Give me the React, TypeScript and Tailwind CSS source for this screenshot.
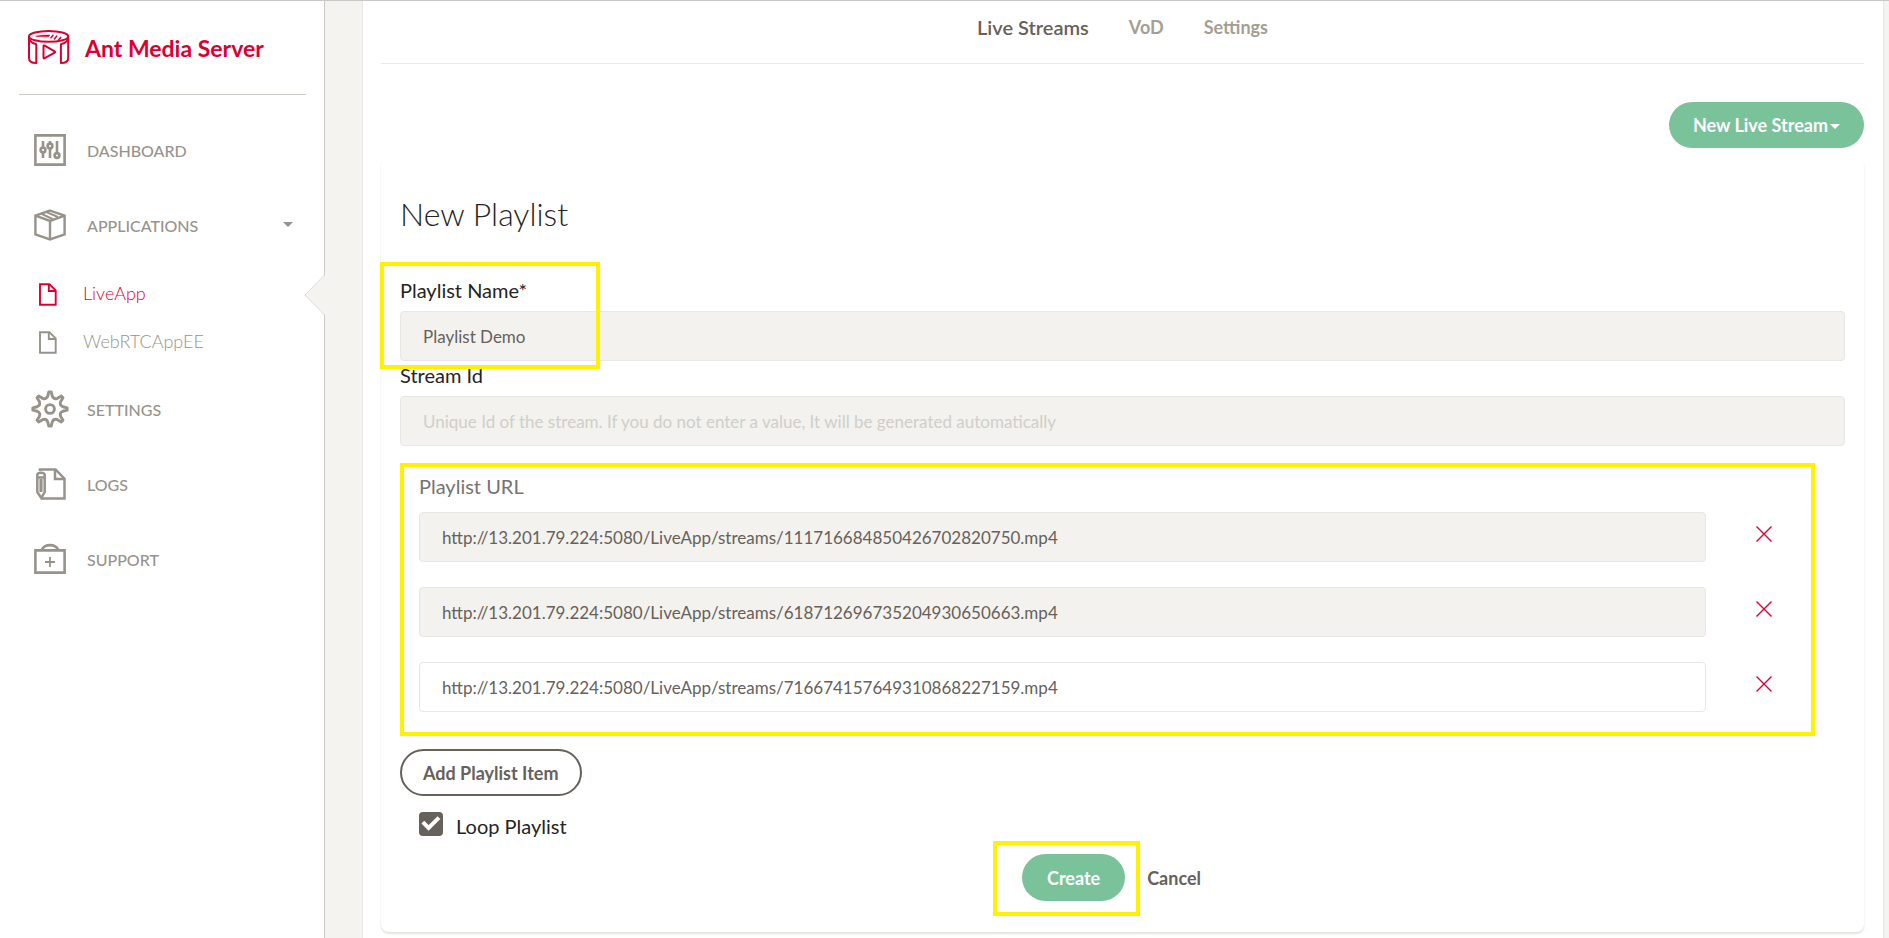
import React, { useState } from "react";

const gearPath = (() => {
  const parts: string[] = [];
  const at = (r: number, deg: number) => {
    const a = (deg * Math.PI) / 180;
    return `${(19 + r * Math.cos(a)).toFixed(2)} ${(19 + r * Math.sin(a)).toFixed(2)}`;
  };
  for (let i = 0; i < 8; i++) {
    const d = i * 45;
    parts.push(`${i === 0 ? "M" : "L"}${at(17.2, d - 4)}`);
    parts.push(`L${at(17.2, d + 4)}`);
    parts.push(`L${at(13, d + 10)}`);
    parts.push(`Q${at(10, d + 22.5)} ${at(13, d + 35)}`);
  }
  return parts.join("") + "Z";
})();

function Logo() {
  return (
    <svg viewBox="28 30 42 35" className="h-[35px] w-[42px]" fill="none" stroke="#dc0032" strokeWidth="2" strokeLinejoin="round" strokeLinecap="round" aria-hidden="true">
      <ellipse cx="48.6" cy="36.4" rx="19.6" ry="5.4" />
      <path d="M29 36.6V58c0 3.400 3 5 7.300 5V44.300c-4-.8-7.300-3.500-7.300-7.700z" />
      <path d="M68.200 36.600V58c0 3.400-3 5-7.300 5V44.300c4-.8 7.300-3.500 7.300-7.700z" />
      <path d="M43.500 46v11.500q0 1.200 1.200.7l10-5.500q1-.7 0-1.400l-10-5.700q-1.200-.6-1.200.4z" />
      <path d="M36 36.200q6-1.400 14-1.100l-1.600 1.600z" fill="#dc0032" strokeWidth=".6" />
      <path d="M53 35.300l-2 2.500M56.800 36l-2.400 3M60.800 37.300l-2.600 3" strokeWidth="1.500" />
    </svg>
  );
}

const stroke = { fill: "none", stroke: "currentColor", strokeWidth: 2.6 };

function PanelIcon() {
  return (
    <svg viewBox="0 0 32 32" className="size-8" {...stroke} aria-hidden="true">
      <path d="M1.400 1.400h29.200v29.200H1.400z" />
      <path d="M9 7v6.500M9 18.500V24M16 7v2.500M16 14.500V24M23 7v12" />
      <circle cx="9" cy="16" r="2.400" />
      <circle cx="16" cy="12" r="2.400" />
      <circle cx="23" cy="21.500" r="2.400" />
    </svg>
  );
}

function PackageIcon() {
  return (
    <svg viewBox="0 0 32 32" className="size-8" {...stroke} strokeWidth={2.4} aria-hidden="true">
      <path d="M16 1.600l14.600 5v18.800L16 30.400 1.400 25.400V6.600zM1.400 6.600L16 12l14.600-5.400M16 12v18" />
      <path d="M7.500 4.800L18.500 10M12.500 3.200L24 8" strokeWidth="2" />
    </svg>
  );
}

function FileIcon() {
  return (
    <svg viewBox="0 0 18 23" className="h-[23px] w-[18px]" {...stroke} strokeWidth={1.9} aria-hidden="true">
      <path d="M1 1.200h9.500L16.700 7.300v14.400H1zM9.800 1v7h7" />
    </svg>
  );
}

function GearIcon() {
  return (
    <svg viewBox="0 0 38 38" className="size-[38px]" {...stroke} strokeWidth={2.9} strokeLinejoin="round" aria-hidden="true">
      <path d={gearPath} />
      <circle cx="19" cy="19" r="4.400" />
    </svg>
  );
}

function LogsIcon() {
  return (
    <svg viewBox="0 0 32 32" className="size-8" {...stroke} strokeWidth={2.5} aria-hidden="true">
      <path d="M6 3V1.400h15.500l9 9.300v19.900H8M21 1v10h10" />
      <path d="M3.300 7q0-2.300 3.700-2.300T10.700 7v17L7.300 30 3.300 24zM3.300 9.500h7.400" />
      <path d="M7 11v13" strokeWidth="3.200" />
    </svg>
  );
}

function SupportIcon() {
  return (
    <svg viewBox="0 0 32 32" className="size-8" {...stroke} aria-hidden="true">
      <path d="M1.400 7.400h29.200v22.200H1.400zM7.500 7q2.500-4.900 8.500-4.900T24.500 7" />
      <path d="M16 14v10M11 19h10" strokeWidth="1.800" />
    </svg>
  );
}

function Caret({ className }: { className: string }) {
  return (
    <svg viewBox="0 0 10 5" className={className} fill="currentColor" aria-hidden="true">
      <path d="M0 0h10L5 5z" />
    </svg>
  );
}

function NavItem({ icon, label, caret }: { icon: React.ReactNode; label: string; caret?: boolean }) {
  return (
    <a href="#" className="flex h-[75px] items-center pr-[31px] pl-[31px] text-[#97938b]">
      <span className="flex w-14 shrink-0 justify-center pr-[18px]">{icon}</span>
      <span className="pt-0.5 text-base font-medium uppercase">{label}</span>
      {caret && <Caret className="ml-auto h-[5px] w-[10px]" />}
    </a>
  );
}

function SubItem({ label, active }: { label: string; active?: boolean }) {
  return (
    <li className="relative">
      <a href="#" className={`flex h-12 items-center pl-[39px] text-lg ${active ? "text-[#dc0032]" : "text-[#97938b]"}`}>
        <span className="w-11 shrink-0">
          <FileIcon />
        </span>
        <span className="pb-0.5 font-light">{label}</span>
      </a>
      {active && (
        <svg viewBox="0 0 21 42" className="absolute top-1 -right-px h-[42px] w-[21px]" aria-hidden="true">
          <path d="M21 1L1 21l20 20z" fill="#f4f3ef" />
          <path d="M20.500 1L1 21l19.500 20" fill="none" stroke="#dddbd6" />
        </svg>
      )}
    </li>
  );
}

const inputBase =
  "block h-[50px] w-full rounded border border-[#e8e7e3] px-[22px] text-[17px] text-[#66615b] placeholder:text-[#cfcfca] outline-none";

function Highlight({ className }: { className: string }) {
  return <div className={`pointer-events-none absolute border-4 border-[#fff200] ${className}`} />;
}

const initialUrls = [
  "http://13.201.79.224:5080/LiveApp/streams/111716684850426702820750.mp4",
  "http://13.201.79.224:5080/LiveApp/streams/618712696735204930650663.mp4",
  "http://13.201.79.224:5080/LiveApp/streams/716674157649310868227159.mp4",
];

export default function App() {
  const [name, setName] = useState("Playlist Demo");
  const [streamId, setStreamId] = useState("");
  const [urls, setUrls] = useState(initialUrls);
  const [loop, setLoop] = useState(true);

  return (
    <div className="flex min-h-screen border-t border-[#c8c8c8] bg-[#f4f3ef] font-['Lato',sans-serif] text-[#252422]">
      <aside className="w-[325px] shrink-0 border-r border-[#cccbc6] bg-white">
        <div className="mr-[18px] ml-[19px] flex h-[94px] items-center gap-[15px] border-b border-[#cccbc6] pl-[9px]">
          <Logo />
          <span className="pt-0.5 text-[23px] font-bold text-[#dc0032]">Ant Media Server</span>
        </div>
        <nav className="pt-[17px]">
          <NavItem icon={<PanelIcon />} label="Dashboard" />
          <NavItem icon={<PackageIcon />} label="Applications" caret />
          <ul className="pt-2 pb-[5px]">
            <SubItem label="LiveApp" active />
            <SubItem label="WebRTCAppEE" />
          </ul>
          <NavItem icon={<GearIcon />} label="Settings" />
          <NavItem icon={<LogsIcon />} label="Logs" />
          <NavItem icon={<SupportIcon />} label="Support" />
        </nav>
      </aside>

      <main className="mr-[5px] ml-[37px] flex-1 border-x border-[#eae8e3] bg-white pr-[19px] pb-1.5 pl-[18px]">
        <nav className="flex h-[63px] items-start justify-center gap-10 border-b border-[#eeebe3] pt-3 text-lg leading-7 font-bold text-[#a49e93]">
          <a href="#" className="text-xl leading-7 font-semibold text-[#66615b]">Live Streams</a>
          <a href="#">VoD</a>
          <a href="#">Settings</a>
        </nav>

        <div className="flex justify-end pt-[38px]">
          <button type="button" className="flex h-[46px] items-center gap-0.5 rounded-full bg-[#7ac29a] px-6 text-lg font-bold text-white">
            New Live Stream
            <Caret className="mt-[3px] h-[5px] w-[10px]" />
          </button>
        </div>

        <form className="mt-[10px] rounded-lg bg-white px-[19px] pt-[34px] pb-[31px] shadow-[0_2px_2px_rgba(204,197,185,0.5)]" onSubmit={(e) => e.preventDefault()}>
          <h1 className="text-[32px] leading-[44px] font-light">New Playlist</h1>

          <div className="relative mt-10">
            <label htmlFor="playlist-name" className="block pb-[7px] text-xl leading-7">Playlist Name*</label>
            <input id="playlist-name" value={name} onChange={(e) => setName(e.target.value)} className={`${inputBase} bg-[#f3f2ee]`} />
            <Highlight className="-top-[14px] -left-5 h-[107px] w-[220px]" />
          </div>
          <div>
            <label htmlFor="stream-id" className="block pb-[7px] text-xl leading-7">Stream Id</label>
            <input
              id="stream-id"
              value={streamId}
              onChange={(e) => setStreamId(e.target.value)}
              placeholder="Unique Id of the stream. If you do not enter a value, It will be generated automatically"
              className={`${inputBase} bg-[#f3f2ee]`}
            />
          </div>

          <div role="group" aria-labelledby="playlist-url" className="relative mt-[17px] mr-[30px] h-[273px] pt-[9px] pr-[42px] pl-[19px]">
            <div id="playlist-url" className="pb-3 text-xl leading-7 text-[#77736d]">Playlist URL</div>
            <ul className="flex flex-col gap-[25px]">
              {urls.map((url, i) => (
                <li key={i} className="flex items-center">
                  <input
                    aria-label={`Playlist URL ${i + 1}`}
                    value={url}
                    onChange={(e) => setUrls(urls.map((u, k) => (k === i ? e.target.value : u)))}
                    className={`${inputBase} flex-1 ${i === 2 ? "bg-white" : "bg-[#f3f2ee]"}`}
                  />
                  <button type="button" aria-label="Remove item" onClick={() => setUrls(urls.filter((_, k) => k !== i))} className="ml-[49px] pb-1.5">
                    <svg viewBox="0 0 18 18" className="size-[18px]" fill="none" stroke="#dc0032" strokeWidth="1.400" aria-hidden="true">
                      <path d="M1.500 1.500l15 15M16.500 1.500l-15 15" />
                    </svg>
                  </button>
                </li>
              ))}
            </ul>
            <Highlight className="inset-0" />
          </div>

          <button type="button" onClick={() => setUrls([...urls, ""])} className="mt-[13px] block h-[47px] rounded-full border-2 border-[#66615b] px-[21px] text-lg font-bold text-[#66615b]">
            Add Playlist Item
          </button>

          <div className="mt-3 flex h-8 items-center gap-[13px] pl-[19px]">
            <span className="grid size-6">
              <input
                id="loop"
                type="checkbox"
                checked={loop}
                onChange={(e) => setLoop(e.target.checked)}
                className="col-start-1 row-start-1 size-6 appearance-none rounded bg-[#66615b]"
              />
              {loop && (
                <svg viewBox="0 0 24 24" className="pointer-events-none col-start-1 row-start-1 size-6" fill="none" stroke="#fff" strokeWidth="4" aria-hidden="true">
                  <path d="M3.800 10.200l5.800 5.800L20 5.600" />
                </svg>
              )}
            </span>
            <label htmlFor="loop" className="pt-1 text-xl leading-7">Loop Playlist</label>
          </div>

          <div className="mt-[14px] flex justify-center">
            <div className="relative">
              <button type="submit" className="h-[47px] rounded-full bg-[#7ac29a] px-[25px] text-lg font-bold text-white">
                Create
              </button>
              <Highlight className="-top-[13px] -right-[15px] -bottom-[15px] -left-[29px]" />
            </div>
            <button type="button" className="h-[47px] px-[22px] text-lg font-bold text-[#66615b]">
              Cancel
            </button>
          </div>
        </form>
      </main>
    </div>
  );
}
